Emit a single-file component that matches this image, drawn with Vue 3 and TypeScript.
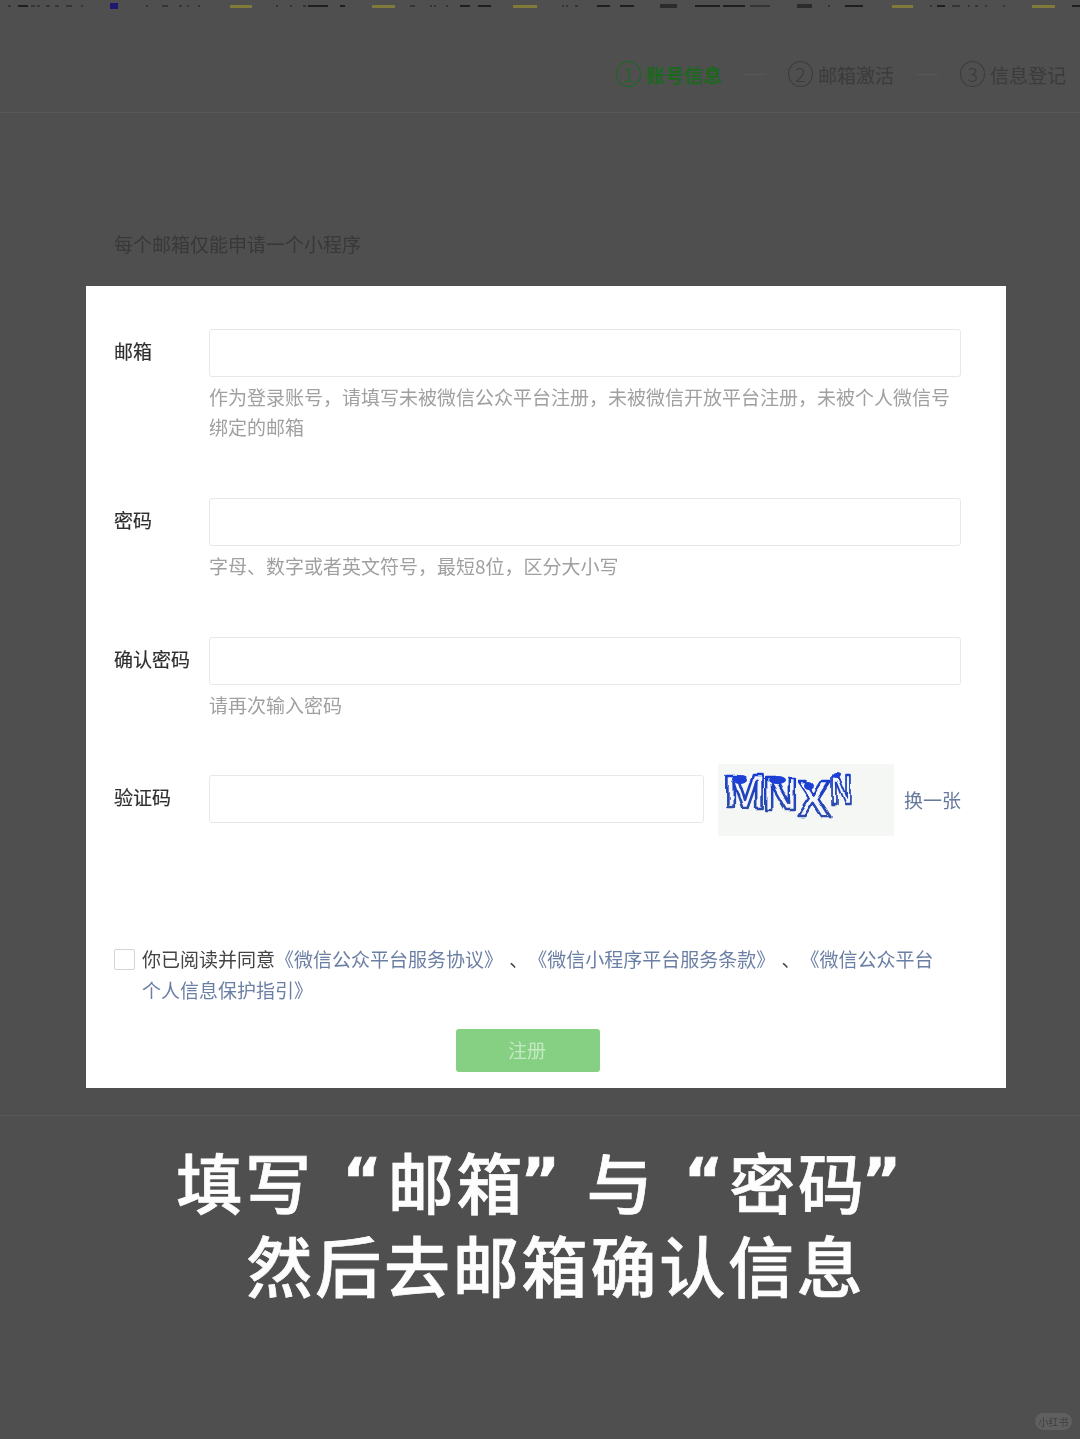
<script setup lang="ts">
type Mark = [number, number, string, number?]
const d = '#1f1f1f'
const g = '#353535'
const y = '#7f7a3a'
const raw: Mark[] = [
  [8, 3, g], [18, 10, d], [31, 4, g], [37, 3, g], [46, 4, g], [55, 4, g], [66, 6, g], [81, 2, g],
  [110, 8, '#1d1a70', 6], [146, 2, g], [162, 6, g], [179, 3, g], [187, 2, g], [198, 2, g],
  [230, 22, y, 3], [276, 2, g], [290, 2, g], [303, 3, g], [308, 20, d], [340, 5, d],
  [372, 23, y, 3], [410, 5, g], [430, 2, g], [434, 2, g], [446, 2, g], [460, 10, d], [478, 13, d],
  [513, 24, y, 3], [562, 2, g], [566, 2, g], [575, 3, g], [597, 13, d], [620, 14, d],
  [660, 17, '#2c2c2c', 4], [695, 25, d], [723, 22, d], [750, 20, g],
  [797, 15, '#2c2c2c', 4], [828, 2, g], [845, 18, d], [892, 21, y, 3],
  [930, 2, g], [937, 8, d], [952, 8, g], [968, 2, g], [975, 3, g], [985, 2, g], [1003, 2, g],
  [1032, 23, y, 3], [1072, 8, d]
]
const marks = raw.map((m, i) => {
  const prev = i ? raw[i - 1] : null
  return {
    width: m[1] + 'px',
    marginLeft: m[0] - (prev ? prev[0] + prev[1] : 0) + 'px',
    background: m[2],
    height: (m[3] ?? 2) + 'px'
  }
})
const steps = [
  { n: '1', label: '账号信息', on: true },
  { n: '2', label: '邮箱激活', on: false },
  { n: '3', label: '信息登记', on: false }
]
</script>

<template>
  <div class="page">
    <div class="strip">
      <i v-for="(m, i) in marks" :key="i" class="mark" :style="m"></i>
    </div>

    <header class="steps">
      <template v-for="(s, i) in steps" :key="s.n">
        <span v-if="i > 0" class="dash"></span>
        <div class="step" :class="{ on: s.on }">
          <span class="num">{{ s.n }}</span>
          <span class="step-label">{{ s.label }}</span>
        </div>
      </template>
    </header>

    <p class="notice">每个邮箱仅能申请一个小程序</p>

    <main class="card">
      <div class="row">
        <label class="label">邮箱</label>
        <div class="field">
          <div class="input"></div>
          <p class="hint">作为登录账号，请填写未被微信公众平台注册，未被微信开放平台注册，未被个人微信号绑定的邮箱</p>
        </div>
      </div>
      <div class="row">
        <label class="label">密码</label>
        <div class="field">
          <div class="input"></div>
          <p class="hint">字母、数字或者英文符号，最短8位，区分大小写</p>
        </div>
      </div>
      <div class="row tight">
        <label class="label">确认密码</label>
        <div class="field">
          <div class="input"></div>
          <p class="hint">请再次输入密码</p>
        </div>
      </div>
      <div class="row code-row">
        <label class="label">验证码</label>
        <div class="code-field">
          <div class="input code-input"></div>
          <div class="captcha">
            <svg width="176" height="72" viewBox="0 0 176 72">
              <defs>
                <filter id="wave" x="-10%" y="-20%" width="120%" height="140%">
                  <feTurbulence type="fractalNoise" baseFrequency="0.035" numOctaves="2" seed="4" result="n" />
                  <feDisplacementMap in="SourceGraphic" in2="n" scale="8" xChannelSelector="R" yChannelSelector="G" />
                  <feGaussianBlur stdDeviation="0.5" />
                </filter>
                <linearGradient id="ink" x1="0" y1="0" x2="0" y2="1">
                  <stop offset="0" stop-color="#1238d8" />
                  <stop offset="1" stop-color="#31509e" />
                </linearGradient>
              </defs>
              <g class="cap-text" filter="url(#wave)">
                <text x="6" y="44" font-size="46" textLength="42" lengthAdjust="spacingAndGlyphs">M</text>
                <text x="45" y="46" font-size="46" textLength="34" lengthAdjust="spacingAndGlyphs">N</text>
                <text x="79" y="53" font-size="52" textLength="35" lengthAdjust="spacingAndGlyphs">X</text>
                <text x="112" y="41" font-size="42" textLength="22" lengthAdjust="spacingAndGlyphs">N</text>
                <ellipse cx="22" cy="15" rx="7" ry="4" class="blot" />
                <ellipse cx="58" cy="17" rx="8" ry="4" class="blot" />
                <ellipse cx="92" cy="21" rx="5" ry="4" class="blot" />
                <ellipse cx="118" cy="11" rx="4" ry="3" class="blot" />
              </g>
            </svg>
          </div>
          <a class="swap">换一张</a>
        </div>
      </div>

      <div class="agree">
        <span class="check"></span>
        <p class="agree-text">你已阅读并同意<a>《微信公众平台服务协议》</a> 、<a>《微信小程序平台服务条款》</a> 、<a>《微信公众平台个人信息保护指引》</a></p>
      </div>

      <button class="submit" type="button">注册</button>
    </main>

    <footer class="caption">
      <div class="cap-line first">填写<span class="q open">“</span>邮箱<span class="q close">”</span>与<span class="q open">“</span>密码<span class="q close">”</span></div>
      <div class="cap-line second">然后去邮箱确认信息</div>
    </footer>

    <span class="badge">小红书</span>
  </div>
</template>

<style>
html, body { margin: 0; background: #4f4f4f; }
</style>

<style scoped>
.page {
  position: relative;
  width: 1080px;
  height: 1439px;
  overflow: hidden;
  background: #4f4f4f;
  font-family: "Noto Sans CJK SC", "Liberation Sans", sans-serif;
  font-size: 19px;
}
.strip {
  display: flex;
  align-items: center;
  height: 12px;
  filter: blur(0.7px);
}
.mark { flex: none; display: block; }
.steps {
  display: flex;
  align-items: center;
  justify-content: flex-end;
  height: 101px;
  padding: 24px 14px 0 0;
  box-sizing: border-box;
  border-bottom: 1px solid #575757;
  color: #3b3b3b;
}
.step { display: flex; align-items: center; gap: 5px; }
.step.on { color: #1c681f; font-weight: 700; }
.num {
  display: flex;
  align-items: center;
  justify-content: center;
  width: 25px;
  height: 26px;
  border: 1.5px solid currentColor;
  border-radius: 50%;
  font-size: 20px;
  font-weight: 300;
  line-height: 1;
  box-sizing: border-box;
}
.dash { width: 22px; height: 1px; margin: 0 22px; background: #575757; }
.notice {
  margin: 119px 0 0 114px;
  height: 54px;
  line-height: 24px;
  color: #383838;
  filter: blur(0.4px);
}
.card {
  width: 920px;
  height: 802px;
  margin-left: 86px;
  padding: 43px 45px 0 28px;
  box-sizing: border-box;
  background: #fff;
  color: #3d3d3d;
}
.row { display: flex; margin-bottom: 56px; }
.row.tight { margin-bottom: 55px; }
.label {
  flex: none;
  width: 95px;
  line-height: 44px;
  color: #2f2f2f;
  -webkit-text-stroke: 0.2px #2f2f2f;
  filter: blur(0.3px);
}
.field { flex: 1; }
.input {
  height: 48px;
  box-sizing: border-box;
  background: #fff;
  border: 1px solid #e8e8e8;
  border-radius: 3px;
}
.hint {
  margin: 5px 0 0;
  line-height: 30px;
  color: #a0a0a0;
  filter: blur(0.3px);
}
.code-row { height: 48px; margin-bottom: 0; }
.code-field { flex: 1; display: flex; align-items: center; }
.code-input { width: 495px; flex: none; }
.captcha {
  flex: none;
  width: 176px;
  height: 72px;
  margin: 2px 10px 0 14px;
  background: #f5f7f5;
}
.captcha svg { display: block; }
.cap-text text {
  font-family: "Liberation Sans", sans-serif;
  font-weight: 700;
  fill: #f4f6fb;
  stroke: url(#ink);
  stroke-width: 2.4px;
  stroke-linejoin: round;
}
.blot { fill: #1c3fd6; }
.swap { color: #677a9c; white-space: nowrap; margin-top: 1px; filter: blur(0.3px); }
.agree {
  display: flex;
  margin-top: 126px;
}
.check {
  flex: none;
  width: 21px;
  height: 21px;
  box-sizing: border-box;
  border: 1px solid #d5d5d5;
  border-radius: 2px;
}
.agree-text {
  width: 805px;
  margin: -6px 0 0 7px;
  line-height: 31px;
  color: #444;
  text-spacing-trim: space-all;
  word-spacing: 2px;
  filter: blur(0.3px);
}
.agree-text a { color: #6b7fa5; }
.submit {
  display: block;
  width: 144px;
  height: 43px;
  margin: 24px 0 0 342px;
  padding: 0 2px 2px 0;
  border: 0;
  border-radius: 3px;
  background: #86d083;
  color: #c3e9c2;
  font: inherit;
  line-height: 41px;
  filter: blur(0.3px);
}
.caption {
  margin-top: 27px;
  border-top: 1px solid #575757;
  padding-top: 23px;
  color: #fdfdfd;
  font-weight: 500;
  font-size: 66px;
  letter-spacing: 2.8px;
  -webkit-text-stroke: 0.7px #fdfdfd;
  text-align: center;
  text-spacing-trim: space-all;
}
.cap-line { height: 83px; line-height: 83px; white-space: nowrap; }
.first { margin-left: 24px; }
.second { margin-left: 32px; }
.q {
  display: inline-block;
  font-family: "DejaVu Sans", sans-serif;
  font-weight: 700;
  font-size: 60px;
  letter-spacing: 0;
  transform: translateY(-8px);
}
.open { width: 74px; text-align: right; padding-right: 6px; box-sizing: border-box; }
.close { width: 66px; margin-left: -5px; text-align: left; box-sizing: border-box; }
.badge {
  position: absolute;
  right: 8px;
  bottom: 9px;
  width: 37px;
  height: 17px;
  border-radius: 9px;
  background: #5f5f5f;
  color: #3f3f3f;
  font-size: 10px;
  line-height: 17px;
  text-align: center;
  filter: blur(0.4px);
}
</style>
